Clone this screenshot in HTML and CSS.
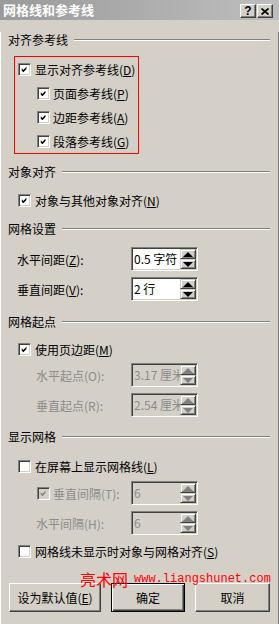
FILE: index.html
```html
<!DOCTYPE html>
<html lang="zh-CN">
<head>
    <meta charset="UTF-8">
    <title>网格线和参考线</title>
    <link rel="stylesheet" href="styles.css">
</head>
<body>
    <div class="dialog">
        <!-- Title bar -->
        <div class="titlebar">
            <span class="title">网格线和参考线</span>
            <div class="title-btns">
                <span class="tbtn">?</span>
                <span class="tbtn">
                    <svg width="8" height="7" viewBox="0 0 8 7"><path d="M0.5 0.5 L7.5 6.5 M7.5 0.5 L0.5 6.5" stroke="#000" stroke-width="1.6"/></svg>
                </span>
            </div>
        </div>

        <div class="content">
            <!-- 对齐参考线 -->
            <div class="group-head mt-12"><span>对齐参考线</span></div>
            <div class="highlight">
                <div class="cb-row"><span class="cb"><svg viewBox="0 0 9 9"><polygon points="1,3 3,5 7,1 7,4 3,8 1,6"/></svg></span><span>显示对齐参考线(<u>D</u>)</span></div>
                <div class="cb-row sub"><span class="cb"><svg viewBox="0 0 9 9"><polygon points="1,3 3,5 7,1 7,4 3,8 1,6"/></svg></span><span>页面参考线(<u>P</u>)</span></div>
                <div class="cb-row sub"><span class="cb"><svg viewBox="0 0 9 9"><polygon points="1,3 3,5 7,1 7,4 3,8 1,6"/></svg></span><span>边距参考线(<u>A</u>)</span></div>
                <div class="cb-row sub"><span class="cb"><svg viewBox="0 0 9 9"><polygon points="1,3 3,5 7,1 7,4 3,8 1,6"/></svg></span><span>段落参考线(<u>G</u>)</span></div>
            </div>

            <!-- 对象对齐 -->
            <div class="group-head mt-10"><span>对象对齐</span></div>
            <div class="cb-row mt-8"><span class="cb"><svg viewBox="0 0 9 9"><polygon points="1,3 3,5 7,1 7,4 3,8 1,6"/></svg></span><span>对象与其他对象对齐(<u>N</u>)</span></div>

            <!-- 网格设置 -->
            <div class="group-head mt-9"><span>网格设置</span></div>
            <div class="spin-row mt-10">
                <span>水平间距(<u>Z</u>):</span>
                <div class="spin">
                    <span class="spin-val">0.5 字符</span>
                    <div class="arrows">
                        <span class="arrow"><svg width="10" height="5" viewBox="0 0 10 5"><polygon points="5,0 10,5 0,5"/></svg></span>
                        <span class="arrow"><svg width="10" height="5" viewBox="0 0 10 5"><polygon points="0,0 10,0 5,5"/></svg></span>
                    </div>
                </div>
            </div>
            <div class="spin-row mt-6">
                <span>垂直间距(<u>V</u>):</span>
                <div class="spin">
                    <span class="spin-val">2 行</span>
                    <div class="arrows">
                        <span class="arrow"><svg width="10" height="5" viewBox="0 0 10 5"><polygon points="5,0 10,5 0,5"/></svg></span>
                        <span class="arrow"><svg width="10" height="5" viewBox="0 0 10 5"><polygon points="0,0 10,0 5,5"/></svg></span>
                    </div>
                </div>
            </div>

            <!-- 网格起点 -->
            <div class="group-head mt-13"><span>网格起点</span></div>
            <div class="cb-row mt-7"><span class="cb"><svg viewBox="0 0 9 9"><polygon points="1,3 3,5 7,1 7,4 3,8 1,6"/></svg></span><span>使用页边距(<u>M</u>)</span></div>
            <div class="spin-row indent disabled mt-2">
                <span>水平起点(O):</span>
                <div class="spin">
                    <span class="spin-val">3.17 厘米</span>
                    <div class="arrows">
                        <span class="arrow"><svg width="10" height="5" viewBox="0 0 10 5"><polygon points="5,0 10,5 0,5"/></svg></span>
                        <span class="arrow"><svg width="10" height="5" viewBox="0 0 10 5"><polygon points="0,0 10,0 5,5"/></svg></span>
                    </div>
                </div>
            </div>
            <div class="spin-row indent disabled mt-6">
                <span>垂直起点(R):</span>
                <div class="spin">
                    <span class="spin-val">2.54 厘米</span>
                    <div class="arrows">
                        <span class="arrow"><svg width="10" height="5" viewBox="0 0 10 5"><polygon points="5,0 10,5 0,5"/></svg></span>
                        <span class="arrow"><svg width="10" height="5" viewBox="0 0 10 5"><polygon points="0,0 10,0 5,5"/></svg></span>
                    </div>
                </div>
            </div>

            <!-- 显示网格 -->
            <div class="group-head mt-12"><span>显示网格</span></div>
            <div class="cb-row mt-9"><span class="cb"></span><span>在屏幕上显示网格线(<u>L</u>)</span></div>
            <div class="spin-row indent-cb disabled mt-3">
                <span class="cb"><svg viewBox="0 0 9 9"><polygon points="1,3 3,5 7,1 7,4 3,8 1,6"/></svg></span>
                <span>垂直间隔(T):</span>
                <div class="spin">
                    <span class="spin-val">6</span>
                    <div class="arrows">
                        <span class="arrow"><svg width="10" height="5" viewBox="0 0 10 5"><polygon points="5,0 10,5 0,5"/></svg></span>
                        <span class="arrow"><svg width="10" height="5" viewBox="0 0 10 5"><polygon points="0,0 10,0 5,5"/></svg></span>
                    </div>
                </div>
            </div>
            <div class="spin-row indent disabled mt-6">
                <span>水平间隔(H):</span>
                <div class="spin">
                    <span class="spin-val">6</span>
                    <div class="arrows">
                        <span class="arrow"><svg width="10" height="5" viewBox="0 0 10 5"><polygon points="5,0 10,5 0,5"/></svg></span>
                        <span class="arrow"><svg width="10" height="5" viewBox="0 0 10 5"><polygon points="0,0 10,0 5,5"/></svg></span>
                    </div>
                </div>
            </div>
            <div class="cb-row mt-4"><span class="cb"></span><span>网格线未显示时对象与网格对齐(<u>S</u>)</span></div>

            <!-- Buttons -->
            <div class="buttons">
                <button class="btn btn-wide">设为默认值(<u>E</u>)</button>
                <button class="btn btn-default">确定</button>
                <button class="btn">取消</button>
            </div>
        </div>

        <!-- Watermark -->
        <div class="watermark"><span class="wm-cn">亮术网</span><span class="wm-url">www.liangshunet.com</span></div>
    </div>
</body>
</html>
```

FILE: styles.css
```css
body {
    margin: 0;
    background-color: #d4d0c8;
    font-family: "Noto Sans CJK SC", "Liberation Sans", sans-serif;
    font-size: 12px;
    color: #000;
}

.dialog {
    width: 279px;
    height: 624px;
    position: relative;
    overflow: hidden;
}

.titlebar {
    height: 20px;
    display: flex;
    align-items: center;
    justify-content: space-between;
    padding: 0 6px 0 3px;
    background: linear-gradient(to right, #9a9a9a, #bebebe);
}

.title {
    color: #fff;
    font-weight: bold;
    font-size: 13px;
    line-height: 20px;
}

.title-btns {
    display: flex;
    gap: 1px;
    margin-top: 2px;
}

.tbtn {
    width: 16px;
    height: 14px;
    box-sizing: border-box;
    background-color: #d4d0c8;
    border: 1px solid;
    border-color: #fff #404040 #404040 #fff;
    box-shadow: inset -1px -1px #808080;
    display: flex;
    align-items: center;
    justify-content: center;
    font-family: "Liberation Sans", sans-serif;
    font-weight: bold;
    font-size: 12px;
    line-height: 1;
}

.content {
    height: 604px;
    box-sizing: border-box;
    border-left: 1px solid #fff;
    border-right: 1px solid #808080;
    border-bottom: 1px solid #808080;
}

.group-head {
    display: flex;
    align-items: center;
    height: 16px;
    line-height: 16px;
    padding: 0 8px 0 7px;
}

.group-head::after {
    content: "";
    flex: 1;
    margin-left: 6px;
    border-top: 1px solid #808080;
    border-bottom: 1px solid #fff;
}

.highlight {
    width: 125px;
    box-sizing: border-box;
    margin: 8px 0 0 13px;
    border: 1px solid #f00;
    padding-left: 3px;
}

.cb-row {
    display: flex;
    align-items: center;
    height: 24px;
    gap: 4px;
    padding-left: 17px;
}

.highlight .cb-row {
    padding-left: 0;
}

.highlight .cb-row.sub {
    padding-left: 19px;
    gap: 3px;
}

.cb {
    width: 13px;
    height: 13px;
    box-sizing: border-box;
    flex: none;
    background-color: #fff;
    border: 1px solid;
    border-color: #808080 #fff #fff #808080;
    box-shadow: inset 1px 1px #404040, inset -1px -1px #d4d0c8;
    padding: 2px;
    display: flex;
}

.cb svg {
    width: 7px;
    height: 7px;
    fill: #000;
}

.spin-row {
    display: flex;
    align-items: center;
    height: 24px;
    padding: 0 80px 0 16px;
}

.spin-row.indent {
    padding-left: 35px;
}

.spin-row.indent-cb {
    padding-left: 36px;
    gap: 3px;
}

.spin {
    margin-left: auto;
    width: 67px;
    height: 24px;
    box-sizing: border-box;
    display: flex;
    background-color: #fff;
    border: 1px solid;
    border-color: #808080 #fff #fff #808080;
    box-shadow: inset 1px 1px #404040, inset -1px -1px #d4d0c8;
    padding: 1px;
}

.spin-val {
    flex: 1;
    overflow: hidden;
    white-space: nowrap;
    padding-left: 1px;
    line-height: 20px;
    font-size: 12px;
}

.arrows {
    width: 16px;
    flex: none;
    display: flex;
    flex-direction: column;
}

.arrow {
    height: 10px;
    box-sizing: border-box;
    background-color: #d4d0c8;
    border: 1px solid;
    border-color: #d4d0c8 #404040 #404040 #d4d0c8;
    box-shadow: inset 1px 1px #fff, inset -1px -1px #808080;
    display: flex;
    align-items: center;
    justify-content: center;
}

.arrow svg {
    fill: #000;
}

.disabled {
    color: #8c8c8c;
}

.disabled .spin {
    background-color: #d4d0c8;
}

.disabled .cb {
    background-color: #d4d0c8;
}

.disabled .cb svg,
.disabled .arrow svg {
    fill: #808080;
}

.buttons {
    display: flex;
    gap: 10px;
    margin-top: 20px;
    padding-left: 8px;
}

.btn {
    height: 29px;
    width: 75px;
    box-sizing: border-box;
    background-color: #d4d0c8;
    border: 1px solid;
    border-color: #fff #404040 #404040 #fff;
    box-shadow: inset -1px -1px #808080;
    font-family: "Noto Sans CJK SC", sans-serif;
    font-size: 12px;
    color: #000;
    padding: 0;
}

.btn-wide {
    width: 92px;
}

.btn-default {
    width: 74px;
    border-color: #000;
    box-shadow: inset 1px 1px #fff, inset -1px -1px #404040, inset -2px -2px #808080;
}

.watermark {
    position: absolute;
    left: 80px;
    top: 570px;
    color: #f00;
    display: flex;
    align-items: center;
    height: 18px;
}

.wm-cn {
    font-size: 16px;
    line-height: 18px;
}

.wm-url {
    font-family: "Liberation Mono", monospace;
    font-size: 12px;
    margin-left: 6px;
}

.mt-2 { margin-top: 2px; }
.mt-3 { margin-top: 3px; }
.mt-4 { margin-top: 4px; }
.mt-6 { margin-top: 6px; }
.mt-7 { margin-top: 7px; }
.mt-8 { margin-top: 8px; }
.mt-9 { margin-top: 9px; }
.mt-10 { margin-top: 10px; }
.mt-12 { margin-top: 12px; }
.mt-13 { margin-top: 13px; }
```
